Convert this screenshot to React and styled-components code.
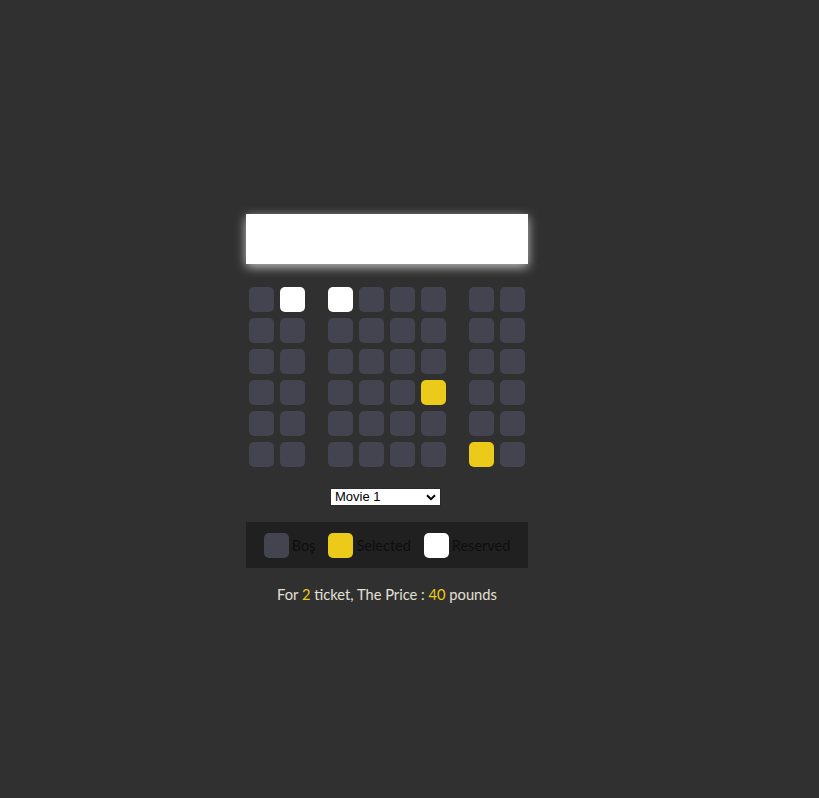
import React, { useState } from 'react';
import styled, { createGlobalStyle } from 'styled-components';

const GlobalStyle = createGlobalStyle`
body {
  margin: 0;
  background-color: #303030;
  font-family: Lato, "Open Sans", sans-serif;
}
`;

const Page = styled.div`
width: 774px;
padding-top: 214px;
display: flex;
flex-direction: column;
align-items: center;
`;

const Screen = styled.div`
width: 282px;
height: 50px;
background-color: #fff;
box-shadow: 0 3px 10px rgba(255, 255, 255, 0.7);
margin-bottom: 20px;
`;

const Row = styled.div`
display: flex;
`;

const colors = {
  empty: '#444451',
  selected: '#ecca1a',
  occupied: '#ffffff',
};

const Seat = styled.div`
width: 25px;
height: 25px;
margin: 3px;
border-radius: 5px;
background-color: ${(p) => colors[p.$state]};

&:nth-of-type(2) {
  margin-right: 20px;
}
&:nth-last-of-type(2) {
  margin-left: 20px;
}
`;

const SelectWrap = styled.div`
position: relative;
margin-top: 18px;
margin-right: 3px;
width: 111px;
height: 18px;
`;

const MovieSelect = styled.select`
display: block;
appearance: none;
width: 111px;
height: 18px;
box-sizing: border-box;
border: 1px solid #2a2a2a;
border-radius: 0;
background: #fff;
color: #000;
font-family: "Liberation Sans", Arial, sans-serif;
font-size: 13px;
line-height: 16px;
padding: 0 0 0 4px;
margin: 0;
outline: none;
`;

const Chevron = styled.svg`
position: absolute;
right: 5px;
top: 6px;
pointer-events: none;
`;

const Legend = styled.ul`
list-style: none;
margin: 16px 0 0;
padding: 0;
width: 282px;
height: 46px;
background-color: #202020;
display: flex;
align-items: center;
justify-content: center;
gap: 13px;
`;

const LegendItem = styled.li`
display: flex;
align-items: center;
gap: 3px;
`;

const LegendSeat = styled.div`
width: 25px;
height: 25px;
border-radius: 5px;
background-color: ${(p) => colors[p.$state]};
`;

const LegendLabel = styled.small`
font-size: 14.5px;
color: #0e0e0e;
`;

const Price = styled.p`
margin: 17px 0 0;
font-size: 14.7px;
color: #e4e0d6;
`;

const Accent = styled.span`
color: #ecca1a;
`;

const layout = [
  ['empty', 'occupied', 'occupied', 'empty', 'empty', 'empty', 'empty', 'empty'],
  ['empty', 'empty', 'empty', 'empty', 'empty', 'empty', 'empty', 'empty'],
  ['empty', 'empty', 'empty', 'empty', 'empty', 'empty', 'empty', 'empty'],
  ['empty', 'empty', 'empty', 'empty', 'empty', 'selected', 'empty', 'empty'],
  ['empty', 'empty', 'empty', 'empty', 'empty', 'empty', 'empty', 'empty'],
  ['empty', 'empty', 'empty', 'empty', 'empty', 'empty', 'selected', 'empty'],
];

const App = () => {
  const [movie, setMovie] = useState('20');

  return (
    <>
      <GlobalStyle />
      <Page>
        <Screen />
        {layout.map((row, r) => (
          <Row key={r}>
            {row.map((state, s) => (
              <Seat key={s} $state={state} />
            ))}
          </Row>
        ))}

        <SelectWrap>
          <MovieSelect value={movie} onChange={(e) => setMovie(e.target.value)}>
            <option value="20">Movie 1</option>
            <option value="25">Movie 2</option>
            <option value="30">Movie 3</option>
          </MovieSelect>
          <Chevron width="10" height="7" viewBox="0 0 10 7">
            <path d="M1 1.2 L5 5.2 L9 1.2" fill="none" stroke="#000" strokeWidth="2" />
          </Chevron>
        </SelectWrap>

        <Legend>
          <LegendItem>
            <LegendSeat $state="empty" />
            <LegendLabel>Boş</LegendLabel>
          </LegendItem>
          <LegendItem>
            <LegendSeat $state="selected" />
            <LegendLabel>Selected</LegendLabel>
          </LegendItem>
          <LegendItem>
            <LegendSeat $state="occupied" />
            <LegendLabel>Reserved</LegendLabel>
          </LegendItem>
        </Legend>

        <Price>
          For <Accent>2</Accent> ticket, The Price : <Accent>40</Accent> pounds
        </Price>
      </Page>
    </>
  );
};

export default App;
